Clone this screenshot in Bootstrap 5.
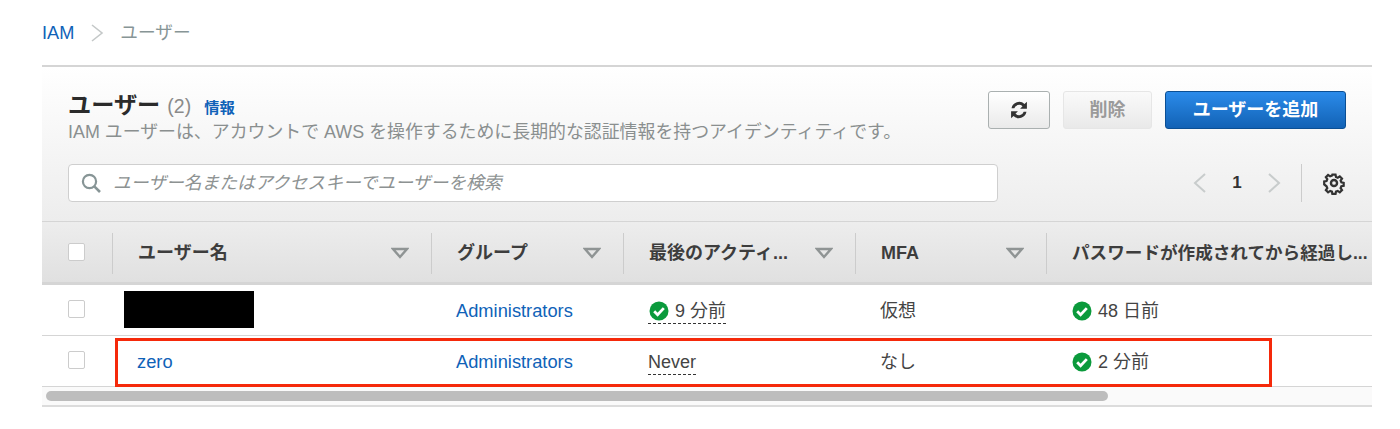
<!DOCTYPE html>
<html lang="ja"><head><meta charset="utf-8"><title>IAM ユーザー</title>
<link href="https://cdn.jsdelivr.net/npm/bootstrap@5.3.0/dist/css/bootstrap.min.css" rel="stylesheet">
<style>
html,body{height:429px;overflow:hidden;background:#fff}
body{font-family:"Liberation Sans","Noto Sans CJK JP",sans-serif;color:#444;font-size:18px;line-height:20px}
.pg{margin:0 28px 0 42px;position:relative}
.crumbs{height:65px;padding-top:23px;color:#879596;gap:16px;font-size:17.7px}
.crumbs a,.lnk{color:#0f62b8;text-decoration:none}
.crumbs a{font-size:18.2px}
.crumbs svg{width:14px;height:20px}
.panel{border-top:2px solid #d5d5d5;background:linear-gradient(#fff,#ededed);height:156px;padding:25px 26px 0}
.hd{height:49px}
.ttl{font-size:23.2px;font-weight:700;color:#2b2b2b;line-height:26px;margin:0;height:26px}
.cnt{font-size:19.5px;font-weight:400;color:#8a8a8a;margin-left:7px}
.info{font-size:15.3px;font-weight:700;color:#0f62b8;margin-left:13px;text-decoration:none}
.sub{color:#8a8f8f;font-size:17.9px;margin:3px 0 0;line-height:22px;white-space:nowrap}
.acts{gap:13px;margin-top:-1px}
.ab{height:38px;border-radius:3px;font-size:18px;font-weight:700;display:flex;align-items:center;justify-content:center;padding:0}
.ab-r{width:62px;border:1px solid #aab0b0;background:linear-gradient(#fff,#eaeaea)}
.ab-d{width:89px;border:1px solid #e6e6e6;background:linear-gradient(#fafafa,#e9e9e9);color:#9a9a9a}
.ab-a{width:181px;border:1px solid #0b4f94;background:linear-gradient(#2b8bea,#1262b5);color:#fff}
.srow{margin-top:23px}
.sbox{width:930px;height:38px;border:1px solid #cfcfcf;border-radius:4px;background:#fff;padding:0 12px;gap:11px;color:#8d9292;font-style:italic;font-size:17.8px}
.pager{height:38px;color:#333}
.pager .num{font-weight:700;font-size:17px;width:60px;text-align:center;color:#333}
.vsep{width:1px;height:38px;background:#ccc;margin:0 20px 0 20px}
table.ut{table-layout:fixed;width:1330px;border-collapse:separate;border-spacing:0}
.ut th{height:64px;padding:1px 0 0 26px;background:linear-gradient(#ededed,#e0e0e0);border-top:1px solid #d5d5d5;border-bottom:3px solid #d5d5d5;font-size:18px;font-weight:700;color:#3d3d3d;position:relative;white-space:nowrap;overflow:hidden}
.ut th .hin{display:flex;justify-content:space-between;align-items:center;height:41px;padding-right:22px}
.ut th .hin-pw{font-size:17.6px;padding-right:0}
.ut th+th::before{content:"";position:absolute;left:0;top:11px;height:41px;width:1px;background:#ccc}
.ut td{height:51px;padding:2px 0 0 25px;border-bottom:1px solid #d5d5d5;vertical-align:middle;white-space:nowrap}
.ut td .lnk{font-size:18.3px}
.ut .ck{padding:0 0 0 26px}
.ckb{display:block;width:17px;height:18px;border:1px solid #ccc;border-radius:2px;background:#fff;margin-top:-3px}
th .ckb{margin-top:0}
.redact{display:block;width:130px;height:37px;background:#000;margin:-3px 0 0 -13px}
.dash{border-bottom:1px dashed #333;padding-bottom:2px;margin-bottom:-3px;display:inline-block;line-height:20px}
.okic{width:20px;height:20px;vertical-align:-4px;margin:0 6px 0 1px}
.sbar{height:20px;background:#fafafa;border-bottom:2px solid #dcdcdc;padding:4px 0 0 4px}
.thumb{display:block;width:1062px;height:10px;border-radius:5px;background:#bdbdbd}
.hl{position:absolute;left:73px;top:338px;width:1157px;height:49px;border:3px solid #f5290a;pointer-events:none}
</style></head><body>
<div class="pg">
 <nav class="crumbs d-flex align-items-start"><a href="#">IAM</a>
  <svg viewBox="0 0 14 20"><path d="M2 2l10 8-10 8" fill="none" stroke="#c4c8c8" stroke-width="1.6"/></svg>
  <span>ユーザー</span></nav>
 <section class="panel">
  <div class="d-flex justify-content-between align-items-start hd">
   <div>
    <h1 class="ttl">ユーザー<span class="cnt">(2)</span><a class="info" href="#">情報</a></h1>
    <p class="sub">IAM ユーザーは、アカウントで AWS を操作するために長期的な認証情報を持つアイデンティティです。</p>
   </div>
   <div class="d-flex acts">
    <button class="ab ab-r" aria-label="更新"><svg width="22" height="22" viewBox="0 0 20 20"><path d="M3.2 8.3A7 7 0 0 1 15 4.6L17.2 2.6v6.2H11l2.2-2.2A4.6 4.6 0 0 0 5.7 8.5zM16.8 11.7A7 7 0 0 1 5 15.4l-2.2 2V11.2H9l-2.2 2.2a4.6 4.6 0 0 0 7.5-1.9z" fill="#333"/></svg></button>
    <button class="ab ab-d">削除</button>
    <button class="ab ab-a">ユーザーを追加</button>
   </div>
  </div>
  <div class="d-flex justify-content-between srow">
   <div class="sbox d-flex align-items-center">
    <svg width="22" height="22" viewBox="0 0 22 22" style="flex:none;margin-left:-1px"><circle cx="9.5" cy="9.5" r="6.6" fill="none" stroke="#879596" stroke-width="2.2"/><path d="M14.3 14.3L20 20" stroke="#879596" stroke-width="2.6"/></svg>
    <span>ユーザー名またはアクセスキーでユーザーを検索</span>
   </div>
   <div class="pager d-flex align-items-center">
    <svg width="14" height="22" viewBox="0 0 14 22"><path d="M12 2L2 11l10 9" fill="none" stroke="#c8cccc" stroke-width="2"/></svg>
    <span class="num">1</span>
    <svg width="14" height="22" viewBox="0 0 14 22"><path d="M2 2l10 9-10 9" fill="none" stroke="#c8cccc" stroke-width="2"/></svg>
    <span class="vsep"></span>
    <svg width="24" height="24" viewBox="0 0 22 22"><path d="M9.3 2h3.4l.5 2.6 1.9.8 2.2-1.5 2.4 2.4-1.5 2.2.8 1.9 2.5.5v3.2l-2.5.5-.8 1.9 1.5 2.2-2.4 2.4-2.2-1.5-1.9.8-.5 2.5H9.3l-.5-2.5-1.9-.8-2.2 1.5-2.4-2.4 1.5-2.2-.8-1.9L.5 12.6V9.4L3 8.9l.8-1.9-1.5-2.2 2.4-2.4 2.2 1.5 1.9-.8z" transform="translate(1.6 1.6) scale(.85)" fill="none" stroke="#333" stroke-width="2.4"/><circle cx="11" cy="11" r="2.8" fill="none" stroke="#333" stroke-width="2.2"/></svg>
   </div>
  </div>
 </section>
 <table class="ut">
  <colgroup><col style="width:70px"><col style="width:319px"><col style="width:192px"><col style="width:232px"><col style="width:191px"><col style="width:326px"></colgroup>
  <thead><tr>
   <th class="ck"><span class="ckb"></span></th>
   <th><div class="hin">ユーザー名<svg width="18" height="12" viewBox="0 0 18 12"><path d="M2 2h14L9 10z" fill="none" stroke="#8f9494" stroke-width="2.4"/></svg></div></th>
   <th><div class="hin">グループ<svg width="18" height="12" viewBox="0 0 18 12"><path d="M2 2h14L9 10z" fill="none" stroke="#8f9494" stroke-width="2.4"/></svg></div></th>
   <th><div class="hin">最後のアクティ...<svg width="18" height="12" viewBox="0 0 18 12"><path d="M2 2h14L9 10z" fill="none" stroke="#8f9494" stroke-width="2.4"/></svg></div></th>
   <th><div class="hin">MFA<svg width="18" height="12" viewBox="0 0 18 12"><path d="M2 2h14L9 10z" fill="none" stroke="#8f9494" stroke-width="2.4"/></svg></div></th>
   <th><div class="hin hin-pw">パスワードが作成されてから経過し...</div></th>
  </tr></thead>
  <tbody>
   <tr><td class="ck"><span class="ckb"></span></td><td><span class="redact"></span></td><td><a class="lnk" href="#">Administrators</a></td>
    <td><span class="dash"><svg class="okic" viewBox="0 0 20 20"><circle cx="10" cy="10" r="9.5" fill="#0b9a3c"/><path d="M5.2 10.3l3.4 3.4 6.2-6.6" fill="none" stroke="#fff" stroke-width="2.8"/></svg>9 分前</span></td>
    <td>仮想</td>
    <td><svg class="okic" viewBox="0 0 20 20"><circle cx="10" cy="10" r="9.5" fill="#0b9a3c"/><path d="M5.2 10.3l3.4 3.4 6.2-6.6" fill="none" stroke="#fff" stroke-width="2.8"/></svg>48 日前</td></tr>
   <tr><td class="ck"><span class="ckb"></span></td><td><a class="lnk" href="#">zero</a></td><td><a class="lnk" href="#">Administrators</a></td>
    <td><span class="dash">Never</span></td>
    <td>なし</td>
    <td><svg class="okic" viewBox="0 0 20 20"><circle cx="10" cy="10" r="9.5" fill="#0b9a3c"/><path d="M5.2 10.3l3.4 3.4 6.2-6.6" fill="none" stroke="#fff" stroke-width="2.8"/></svg>2 分前</td></tr>
  </tbody>
 </table>
 <div class="sbar"><span class="thumb"></span></div>
 <div class="hl"></div>
</div>
<script src="https://cdn.jsdelivr.net/npm/bootstrap@5.3.0/dist/js/bootstrap.bundle.min.js"></script>
</body></html>
